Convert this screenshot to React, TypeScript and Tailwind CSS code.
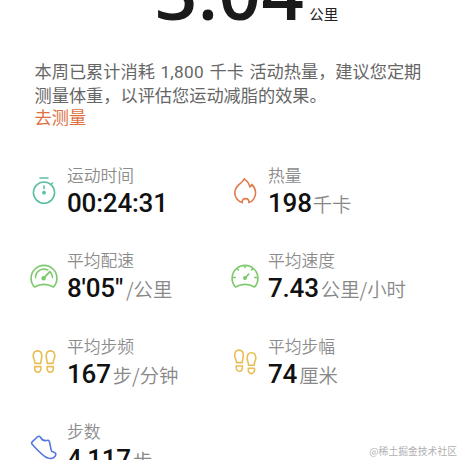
import { ReactNode } from 'react';

type Stat = {
    label: string;
    value: string;
    unit?: string;
    icon: ReactNode;
    gap?: string;
};

const TimerIcon = () => (
    <svg className="w-8 h-8" viewBox="0 0 32 32" fill="none" stroke="#5dbfa6" strokeWidth="1.6" strokeLinecap="round">
        <circle cx="16" cy="17.6" r="10.6" />
        <path d="M12 3h8M23.400 9l1-1M16 11v2.600" />
        <circle cx="16" cy="17.7" r="1.1" fill="#5dbfa6" />
    </svg>
);

const FlameIcon = () => (
    <svg className="w-8 h-8" viewBox="0 0 32 32" fill="none" stroke="#df7c4c" strokeWidth="1.6" strokeLinecap="round" strokeLinejoin="round">
        <path d="M15.200 3.800c3.200 2.200 5.200 5 5.600 8.200 1-.5 1.700-1.400 2.100-2.600 2.200 2.400 3.700 5.300 3.700 8.400 0 4.700-2.900 8.800-6.700 9.800.6-2.700-1.300-4-3.300-4s-3.900 1.300-3.300 4C9 26.400 5.800 22.400 5.800 17.900c0-3.800 1.900-6.300 4.700-8.700 2-1.700 3.900-3.100 4.700-5.400z" />
    </svg>
);

const PaceIcon = () => (
    <svg className="w-8 h-8" viewBox="0 0 32 32" fill="none" stroke="#7bc96b" strokeWidth="1.6" strokeLinecap="round" strokeLinejoin="round">
        <path d="M6.500 27A12.900 12.900 0 1 1 25.500 27Q16 21.800 6.500 27z" />
        <path d="M7.500 17.500a8.500 8.500 0 0 1 12.300-7.500M22.500 12.200a8.500 8.500 0 0 1 2 5.300" />
        <path d="M16 17.800l5.600-6" strokeWidth="1.8" />
        <circle cx="15.600" cy="18.200" r="1.500" fill="#7bc96b" />
    </svg>
);

const SpeedIcon = () => (
    <svg className="w-8 h-8" viewBox="0 0 32 32" fill="none" stroke="#7bc96b" strokeWidth="1.6" strokeLinecap="round" strokeLinejoin="round">
        <path d="M6.500 27A12.900 12.900 0 1 1 25.500 27Q16 21.800 6.500 27z" />
        <path d="M16 6v1.600M8.500 9l1 1M23.500 9l-1 1M4.500 17.500h1.800M25.700 17.500h1.800M16.500 17.500l3.200-3.400" />
        <circle cx="16" cy="18" r="1.200" fill="#7bc96b" />
    </svg>
);

const CadenceIcon = () => (
    <svg className="w-8 h-8" viewBox="0 0 32 32" fill="none" stroke="#e9bd55" strokeWidth="1.6" strokeLinejoin="round">
        <path d="M9.500 4.900c2.900 0 4.300 2.200 4.300 5.200 0 2.700-.9 4-1.100 7.300H7.100C6.900 14.100 5.200 12.800 5.200 10.100c0-3 1.400-5.200 4.300-5.200z" />
        <path d="M6.700 20.600h6.200c.4 3.400-.8 5.700-3 5.700s-3.700-2.300-3.200-5.700z" />
        <path d="M22.500 4.900c2.900 0 4.300 2.200 4.300 5.200 0 2.700-1.700 4-1.900 7.300h-5.600c-.2-3.300-1.100-4.600-1.100-7.300 0-3 1.400-5.200 4.300-5.200z" />
        <path d="M19.100 20.600h6.200c.5 3.400-1 5.700-3.200 5.700s-3.400-2.300-3-5.700z" />
    </svg>
);

const StrideIcon = () => (
    <svg className="w-8 h-8" viewBox="0 0 32 32" fill="none" stroke="#e9bd55" strokeWidth="1.6" strokeLinejoin="round">
        <path d="M10 4.100c2.900 0 4.300 2.200 4.300 5.200 0 2.700-.9 4-1.100 7.300H7.600C7.400 13.300 5.700 12 5.700 9.300c0-3 1.400-5.200 4.300-5.200z" />
        <path d="M7.200 20h6.200c.4 3.200-.8 5.300-3 5.300S6.800 23.200 7.200 20z" />
        <path d="M22.500 6.700c2.900 0 4.300 2.200 4.300 5.200 0 2.700-1.500 4-1.700 7.300h-5.600c-.2-3.300-1.300-4.600-1.300-7.300 0-3 1.400-5.200 4.300-5.200z" />
        <path d="M19.300 22.300h6.200c.5 3.200-1 5.300-3.200 5.300s-3.400-2.100-3-5.300z" />
    </svg>
);

const ShoeIcon = () => (
    <svg className="w-8 h-8" viewBox="0 0 32 32" fill="none" stroke="#5376e0" strokeWidth="1.6" strokeLinejoin="round">
        <path d="M4.400 10.700l4.900-4.700c1.400-1.200 2.400-.9 3.300.5 1.400 2.400 3.200 3.700 6 3 1.800-.5 2.700 0 3 1.800l1.500 7.500c.2 1.400 1.200 2.100 2.800 2.500 1.800.4 2.400 1.900 1.400 3.600-1.300 2.200-4.200 3.100-7.400 2.200C15.400 25.700 9.800 19.400 4.600 13.800c-1.200-1.200-1.300-2.200-.2-3.100z" />
    </svg>
);

const stats: Stat[] = [
    { label: '运动时间', value: '00:24:31', icon: <TimerIcon /> },
    { label: '热量', value: '198', unit: '千卡', icon: <FlameIcon />, gap: 'ml-px' },
    { label: '平均配速', value: '8\'05"', unit: '/公里', icon: <PaceIcon />, gap: 'ml-[3px]' },
    { label: '平均速度', value: '7.43', unit: '公里/小时', icon: <SpeedIcon />, gap: 'ml-[2px]' },
    { label: '平均步频', value: '167', unit: '步/分钟', icon: <CadenceIcon />, gap: 'ml-[2px]' },
    { label: '平均步幅', value: '74', unit: '厘米', icon: <StrideIcon />, gap: 'ml-[2px]' },
    { label: '步数', value: '4,117', unit: '步', icon: <ShoeIcon />, gap: 'ml-[2px]' },
];

const StatItem = ({ label, value, unit, icon, gap }: Stat) => (
    <div className="flex">
        <div className="w-8 mr-[7px] pt-[10px] shrink-0">{icon}</div>
        <div className="whitespace-nowrap">
            <div className="h-5 text-[16.8px] leading-5 font-[350] text-[#8c8c8c]">{label}</div>
            <div className="h-9 flex items-baseline leading-9">
                <span className="font-['Roboto'] text-[26px] font-medium tracking-[-0.200px] text-[#111]">{value}</span>
                {unit && <span className={`text-[19.400px] font-[350] text-[#888] ${gap}`}>{unit}</span>}
            </div>
        </div>
    </div>
);

export default function App() {
    return (
        <div className="relative w-[460px] h-[460px] overflow-hidden bg-white font-['Noto_Sans_CJK_SC',sans-serif]">
            <div className="h-[60px] flex items-end pl-[155px] pb-[31px]">
                <div className="flex items-baseline leading-none whitespace-nowrap">
                    <span className="font-['Open_Sans'] text-[74px] leading-none font-semibold tracking-[0.500px] text-[#1a1a1a]">3.04</span>
                    <span className="ml-[5px] text-[14.500px] text-[#222]">公里</span>
                </div>
            </div>

            <div className="h-[71px] pl-[34.500px] text-[17.200px] leading-[22.500px] text-[#666] whitespace-nowrap">
                <p className="[word-spacing:1.700px]">
                    本周已累计消耗 <span className="font-['Roboto'] tracking-[0.300px]">1,800</span> 千卡 活动热量，建议您定期
                </p>
                <p>测量体重，以评估您运动减脂的效果。</p>
                <p className="text-[#e0703f]">去测量</p>
            </div>

            <div className="grid grid-cols-[201px_201px] auto-rows-[85.400px] pl-7 pt-[34px]">
                {stats.map((stat) => (
                    <StatItem key={stat.label} {...stat} />
                ))}
            </div>

            <div className="absolute right-[3px] bottom-px text-[9.800px] leading-4 text-[#b0b0b0]">@稀土掘金技术社区</div>
        </div>
    );
}
